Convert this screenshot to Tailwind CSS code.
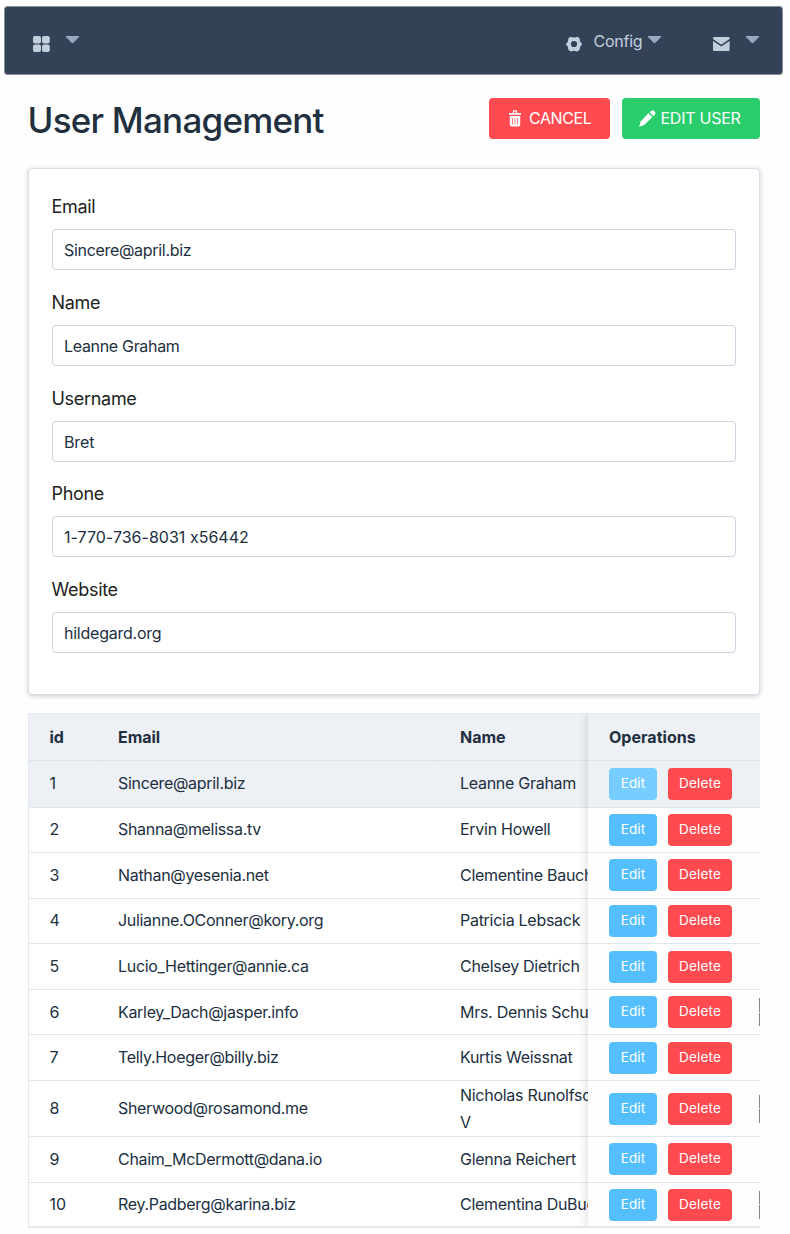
<!DOCTYPE html>
<html lang="en">
<head>
<meta charset="utf-8">
<title>User Management</title>
<script src="https://cdn.jsdelivr.net/npm/@tailwindcss/browser@4"></script>
</head>
<body class="bg-[#fefefe] font-['Inter',sans-serif] [font-feature-settings:'calt'_0] text-[#212f3f] w-[790px] h-[1234px] overflow-hidden">
<nav class="ml-[5px] mt-[7px] w-[777px] h-[67px] bg-[#344257] rounded-[2px] outline outline-[#344257]/60 flex items-start text-[#c1cfdd]">
  <svg class="ml-7 mt-[29px] w-[17px] h-[16px]" viewBox="0 0 17 16" fill="#c1cfdd"><rect x="0" y="0" width="8" height="7.4" rx="2"/><rect x="9" y="0" width="7.8" height="7.4" rx="2"/><rect x="0" y="8.5" width="8" height="7.5" rx="2"/><rect x="9" y="8.5" width="7.8" height="7.5" rx="2"/></svg>
  <svg class="ml-4 mt-[29px] w-[13px] h-[8px]" viewBox="0 0 13 8" fill="#9aa9c3"><path d="M0 0h13v1.1L7.4 6.7q-.9.8-1.8 0L0 1.1z"/></svg>
  <svg class="ml-[487px] mt-[29px] w-[16px] h-[16px]" viewBox="0 0 16 16"><path fill="#c1cfdd" fill-rule="evenodd" d="M4.300 .9Q5 .4 5.700 .9Q8 2 10.300 .9Q11 .4 11.700 .9L13.300 2Q14 2.600 13.800 3.500Q13.700 6.100 15.400 7Q16 7.500 16 8.100Q16 8.700 15.400 9.200Q13.700 10.200 13.800 12.700Q14 13.500 13.300 14.100L11.700 15.200Q11 15.700 10.300 15.200Q8 14.100 5.700 15.200Q5 15.700 4.300 15.200L2.700 14.100Q2 13.500 2.200 12.700Q2.300 10.200 .6 9.200Q0 8.700 0 8.100Q0 7.500 .6 7Q2.300 6.100 2.200 3.500Q2 2.600 2.700 2zM8 4.900a3.100 3.100 0 1 0 0 6.200a3.100 3.100 0 1 0 0-6.200z"/></svg>
  <span class="ml-[11.500px] mt-[22px] text-[16px] tracking-[-0.25px] leading-6 w-[49px] whitespace-nowrap">Config</span>
  <svg class="ml-[5px] mt-[29px] w-[13px] h-[8px]" viewBox="0 0 13 8" fill="#9aa9c3"><path d="M0 0h13v1.1L7.4 6.700q-.9.8-1.800 0L0 1.100z"/></svg>
  <svg class="ml-[52px] mt-[30px] w-[17px] h-[14px]" viewBox="0 0 17 14" fill="#c1cfdd"><path d="M1 0h14.600q1 0 1 1v.9L8.300 7.700 0 1.900V1q0-1 1-1z"/><path d="M0 3.900L8.300 9.500l8.300-5.600V13q0 1-1 1H1q-1 0-1-1z"/></svg>
  <svg class="ml-[16px] mt-[29px] w-[13px] h-[8px]" viewBox="0 0 13 8" fill="#9aa9c3"><path d="M0 0h13v1.100L7.400 6.700q-.9.8-1.800 0L0 1.100z"/></svg>
</nav>

<main class="ml-[27.5px] w-[732px]">
  <header class="flex items-start pt-[23px] h-[94px]">
    <h1 class="flex-1 text-[35px] leading-[46px] font-medium tracking-[-0.77px] whitespace-nowrap">User Management</h1>
    <button class="mt-[0.5px] w-[121px] h-[41px] rounded-[4px] bg-[#ff4b50] text-white text-[16px] flex items-center pl-5">
      <svg class="w-[12px] h-[17px] mr-2" viewBox="0 0 12 17" fill="#fff"><path fill-rule="evenodd" d="M3.900 3V1.200Q3.900.3 4.800.3h2.400q.9 0 .9.900V3zM5.100 1.500V3h1.800V1.500z"/><path d="M0 3h12v1.800H0z"/><path fill-rule="evenodd" d="M.8 6h10.400v8.700q0 1.800-1.800 1.800H2.600q-1.800 0-1.800-1.800zM3.100 8v6.500h.7V8zm2.500 0v6.500h.7V8zm2.500 0v6.500h.7V8z"/></svg>
      <span class="whitespace-nowrap tracking-[-0.4px]">CANCEL</span>
    </button>
    <button class="mt-[0.5px] ml-[11.500px] w-[138px] h-[41px] rounded-[4px] bg-[#29cd6b] text-white text-[16px] flex items-center pl-[17.5px]">
      <svg class="w-[17px] h-[17px] mr-[4.5px]" viewBox="0 0 17 17" fill="#fff"><path d="M9.400 3.300l3.900 3.900-8.200 7.900-5 1.600 1.500-5.200z"/><path d="M10.600 2.200L12.200.9q1.700-1.200 3.300.3 1.700 1.700.4 3.300l-1.500 1.700z"/></svg>
      <span class="whitespace-nowrap tracking-[-0.25px]">EDIT USER</span>
    </button>
  </header>

  <section class="h-[527px] rounded-[4px] border border-[#d6dfe9] bg-white shadow-[0_1px_5px_rgba(0,0,0,0.2)] px-[23px] pt-[21px]" id="fields"></section>

  <div class="mt-[18px] relative h-[515px] overflow-hidden border-l border-t border-b-2 border-[#e2e8ee]">
    <div id="rows"></div>
    <div class="absolute top-0 left-[559px] w-[200px] h-[515px] shadow-[0_0_10px_rgba(0,0,0,0.16)]" id="ops"></div>
  </div>
</main>

<script>
const fields = [["Email","Sincere@april.biz","tracking-[-0.31px]"],["Name","Leanne Graham","tracking-[-0.32px]"],["Username","Bret","tracking-[-0.1px]"],["Phone","1-770-736-8031 x56442","tracking-[0.02px]"],["Website","hildegard.org","tracking-[-0.24px]"]];
document.getElementById("fields").innerHTML = fields.map(([l,v,t]) => `
  <div class="h-[95.8px]">
    <label class="block text-[18px] tracking-[-0.3px] leading-[34px] h-[39px] text-[#222222]">${l}</label>
    <div class="h-[41px] rounded-[4px] border border-[#cad5e2] bg-white px-[11.5px] text-[16px] leading-[41px] whitespace-nowrap"><span class="${t}">${v}</span></div>
  </div>`).join("");

const people = [
  ["1","Sincere@april.biz","Leanne Graham",46.8],
  ["2","Shanna@melissa.tv","Ervin Howell",45.2],
  ["3","Nathan@yesenia.net","Clementine Bauch",45.6],
  ["4","Julianne.OConner@kory.org","Patricia Lebsack",45.6],
  ["5","Lucio_Hettinger@annie.ca","Chelsey Dietrich",45.7],
  ["6","Karley_Dach@jasper.info","Mrs. Dennis Schulist",45.6],
  ["7","Telly.Hoeger@billy.biz","Kurtis Weissnat",45.6],
  ["8","Sherwood@rosamond.me","Nicholas Runolfsdottir<br>V",56],
  ["9","Chaim_McDermott@dana.io","Glenna Reichert",45.600],
  ["10","Rey.Padberg@karina.biz","Clementina DuBuque",45.4]
];
const head = `
  <div class="flex h-[47px] items-center bg-[#edf0f5] border-b border-[#dbe3ea] text-[16px] tracking-[-0.05px] font-bold">
    <div class="w-[69.500px] h-full flex items-center pl-[21px] border-r border-[#f2f4f8]">id</div>
    <div class="w-[342px] h-full flex items-center pl-5 border-r border-[#f2f4f8]">Email</div>
    <div class="pl-[20px]">Name</div>
  </div>`;
document.getElementById("rows").innerHTML = head + people.map(([i,e,n,h],k) => `
  <div class="flex items-center border-b border-[#dfe6ed] text-[16px] leading-[27px] whitespace-nowrap ${k ? "bg-white" : "bg-[#edf0f5]"}" style="height:${h}px">
    <div class="w-[69.500px] h-full flex items-center pl-[21px] border-r ${k ? "border-white" : "border-[#f2f4f8]"}">${i}</div>
    <div class="w-[342px] h-full flex items-center pl-5 tracking-[-0.31px] border-r ${k ? "border-white" : "border-[#f2f4f8]"}">${e}</div>
    <div class="pl-[20px] tracking-[-0.28px]">${n}</div>
  </div>`).join("");
document.getElementById("ops").innerHTML = `
  <div class="h-[47px] flex items-center pl-[21.5px] bg-[#edf0f5] border-b border-[#dbe3ea] text-[16px] tracking-[0.03px] font-bold">Operations</div>` +
  people.map((p,k) => `
  <div class="flex items-center border-b border-[#dfe6ed] pl-[21.5px] text-[13.5px] tracking-[0.15px] text-white ${k ? "bg-[#fefefe]" : "bg-[#edf0f5]"}" style="height:${p[3]}px">
    <button class="w-12 h-8 pb-[1.5px] rounded-[4px] ${k ? "bg-[#55bffe]" : "bg-[#77cdff]"}">Edit</button>
    <button class="ml-[11px] w-16 h-8 pb-[1.5px] rounded-[4px] bg-[#ff4b50]">Delete</button>
    ${[5,7,9].includes(k) ? '<i class="ml-[27px] w-[1px] h-7 bg-[#7d8792] bg-[linear-gradient(#fefefe,#fefefe)] bg-no-repeat bg-[length:1px_1px] bg-center"></i>' : ""}
  </div>`).join("");
</script>
</body>
</html>
